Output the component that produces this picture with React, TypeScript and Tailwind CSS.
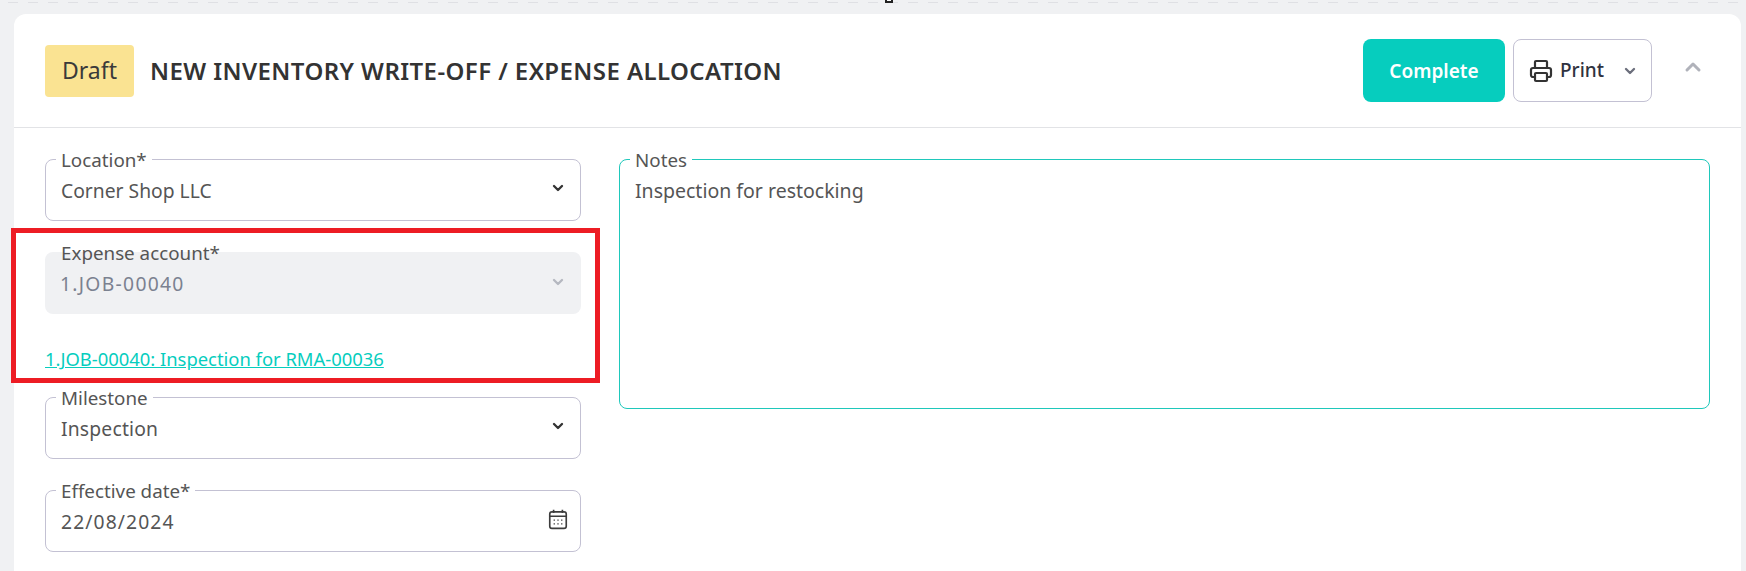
import { ChevronDown, ChevronUp, Printer } from "lucide-react";

function CalendarIcon() {
  return (
    <svg className="w-[22px] h-[22px] text-[#3d3d3d]" viewBox="0 0 20 20" fill="none" stroke="currentColor" strokeWidth={1.5}>
      <rect x="2.5" y="3.5" width="15" height="15" rx="2" />
      <path d="M2.5 7.5h15M6 1.5v3M14 1.5v3" />
      <path d="M6 11h1.2M9.4 11h1.2M12.8 11h1.2M6 14.5h1.2M9.4 14.5h1.2M12.8 14.5h1.2" strokeWidth={1.2} />
    </svg>
  );
}

interface FieldProps {
  label: string;
  value: string;
  valueClassName?: string;
  disabled?: boolean;
  date?: boolean;
}

function Field({ label, value, valueClassName, disabled, date }: FieldProps) {
  return (
    <div
      className={`relative h-[62px] rounded-lg flex justify-between pl-[15px] text-[19.3px] leading-6 ${
        disabled
          ? "bg-[#f0f1f3] text-[#7b8190] pt-5 pr-[15px]"
          : "bg-white border border-[#c3c1d3] text-[#555555] pt-[19px] pr-[14px]"
      }`}
    >
      <span className={valueClassName}>{value}</span>
      {date ? (
        <span className="-mt-[2px] -mr-[3px]">
          <CalendarIcon />
        </span>
      ) : (
        <ChevronDown
          className={`w-4 h-4 ${disabled ? "mt-[2px] text-[#b5b8c0]" : "mt-[1px] text-[#333333]"}`}
          strokeWidth={3.5}
        />
      )}
      <span
        className={`absolute px-[5px] text-[18.8px] leading-7 text-[#555555] ${
          disabled ? "left-[11px] -top-[13px]" : "left-[10px] -top-[14px] bg-white"
        }`}
      >
        {label}
      </span>
    </div>
  );
}

export default function App() {
  return (
    <div
      className="h-[571px] overflow-hidden bg-[#f0f1f3] pt-[14px] pl-[14px] pr-[5px] relative"
      style={{ fontFamily: '"Noto Sans", sans-serif' }}
    >
      <div className="absolute top-[2px] left-0 right-0 h-[1px] bg-[repeating-linear-gradient(90deg,transparent_0_8px,#dfe0e4_8px_18px,transparent_18px_20px)]" />
      <div className="absolute top-0 left-[885px] w-2 h-[3px] bg-white border-x-2 border-b-2 border-[#222222]" />
      <div className="bg-white rounded-t-xl h-[600px]">
        <div className="flex items-center h-[114px] border-b border-[#e2e3e6] pl-[31px] pr-[36px]">
          <div className="flex items-center justify-center w-[89px] h-[52px] rounded bg-[#fae392] text-[23px] text-[#3a3a3a]">
            Draft
          </div>
          <h1 className="ml-4 font-semibold text-[24px] tracking-[0.42px] text-[#333333]">
            NEW INVENTORY WRITE-OFF / EXPENSE ALLOCATION
          </h1>
          <div className="ml-auto flex items-center">
            <button className="w-[142px] h-[63px] pt-[2px] rounded-lg bg-[#06cdbe] text-white font-semibold text-[19px]">
              Complete
            </button>
            <button className="ml-2 w-[139px] h-[63px] rounded-lg border border-[#c3c1d3] bg-white flex items-center pl-[15px] text-[19px] font-medium text-[#2f3240]">
              <Printer className="w-6 h-6 text-[#333333]" strokeWidth={2.2} />
              <span className="ml-[7px]">Print</span>
              <ChevronDown className="w-4 h-4 ml-auto mr-[13px] text-[#6b6e7c]" strokeWidth={3.5} />
            </button>
            <ChevronUp className="ml-[29px] w-[24px] h-[24px] text-[#b0b2ba] -mt-2" strokeWidth={3} />
          </div>
        </div>

        <div className="grid grid-cols-[536px_1091px] gap-x-[38px] pl-[31px] pt-[31px]">
          <div className="flex flex-col">
            <Field label="Location*" value="Corner Shop LLC" />
            <div className="relative mt-[31px]">
              <Field label="Expense account*" value="1.JOB-00040" valueClassName="tracking-[1.3px]" disabled />
              <a className="block mt-[33px] text-[18.4px] leading-6 text-[#06cdbe] underline" href="#">
                1.JOB-00040: Inspection for RMA-00036
              </a>
              <div className="absolute -left-[34px] -right-[19px] -top-[24px] -bottom-[12px] border-[5px] border-[#ed1c24] pointer-events-none" />
            </div>
            <div className="mt-[26px]">
              <Field label="Milestone" value="Inspection" valueClassName="tracking-[0.2px]" />
            </div>
            <div className="mt-[31px]">
              <Field label="Effective date*" value="22/08/2024" valueClassName="tracking-[1.1px]" date />
            </div>
          </div>
          <div className="relative h-[250px] rounded-lg border border-[#1fc8bb] pl-[15px] pt-[19px] text-[19.5px] leading-6 text-[#555555]">
            Inspection for restocking
            <span className="absolute left-[10px] -top-[14px] px-[5px] text-[18.8px] leading-7 bg-white">Notes</span>
          </div>
        </div>
      </div>
    </div>
  );
}
